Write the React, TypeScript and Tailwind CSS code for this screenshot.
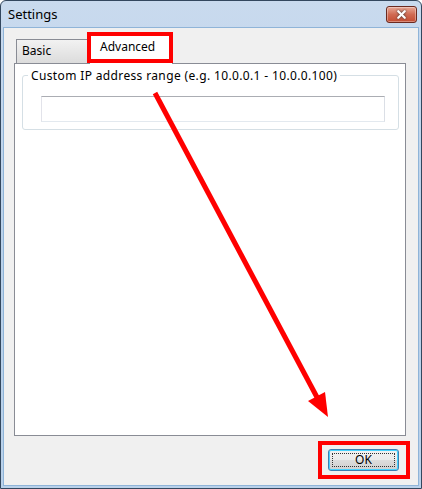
import { X } from "lucide-react";

const font = { fontFamily: '"Noto Sans", "Liberation Sans", sans-serif' };

const TitleBar = () => (
  <div className="h-[26px] flex items-start justify-between pl-[7px] pr-[4px] pt-[5px]">
    <span className="text-[13px] leading-[16px] text-black">Settings</span>
    <button className="w-[31px] h-[17px] rounded-[3px] border border-[#6b2a20] bg-gradient-to-b from-[#e8a896] via-[#d06a52] to-[#c44b30] flex items-center justify-center shadow-[inset_0_0_0_1px_rgba(255,255,255,0.35)]">
      <X size={13} strokeWidth={4} className="text-white drop-shadow-[0_0_1px_#333]" />
    </button>
  </div>
);

const Tabs = () => (
  <div className="h-[35px] flex items-end pl-[12px]">
    <div className="w-[73px] h-[24px] border border-b-0 border-[#898c95] bg-gradient-to-b from-[#f2f2f2] to-[#dcdcdc] text-[12px] leading-[22px] pl-[5px] text-black">
      Basic
    </div>
    <div className="w-[84px] h-[32px] -mb-px border border-b-0 border-[#898c95] bg-white text-[12px] leading-[28px] pl-[10px] text-black z-10">
      Advanced
    </div>
  </div>
);

const Panel = () => (
  <div className="ml-[10px] mr-[12px] h-[373px] border border-[#898c95] bg-white pl-[7px] pr-[6px] pt-[4px]">
    <fieldset className="border border-[#d5dfe5] rounded-[3px] p-0">
      <legend className="ml-[5px] px-[3px] text-[12px] leading-[15px] tracking-[0.36px] text-black">
        Custom IP address range (e.g. 10.0.0.1 - 10.0.0.100)
      </legend>
      <div className="pl-[18px] pr-[13px] pt-[13px] pb-[7px]">
        <input
          className="block w-full h-[26px] border border-[#abadb3] border-l-[#e2e3ea] border-r-[#dbdfe6] border-b-[#e3e9ef] outline-none"
          type="text"
        />
      </div>
    </fieldset>
  </div>
);

const Footer = () => (
  <div className="flex-1 flex justify-end items-start pt-[13px] pr-[19px]">
    <button className="relative w-[71px] h-[22px] rounded-[3px] border border-[#3c7fb1] bg-[linear-gradient(#f2f2f2_0%,#ebebeb_50%,#dddddd_50%,#cfcfcf_100%)] shadow-[inset_0_0_0_1px_#48d2fe] text-[12px] leading-[18px] text-black">
      <span className="absolute inset-[3px] border border-dotted border-[#333]" />
      OK
    </button>
  </div>
);

const Arrow = () => (
  <svg className="absolute inset-0 pointer-events-none z-20" width="422" height="489">
    <line x1="154" y1="92" x2="318" y2="400" stroke="#ff0000" strokeWidth="5" />
    <polygon points="307,400 324,391 327,416" fill="#ff0000" />
  </svg>
);

export default function App() {
  return (
    <div
      className="relative w-[422px] h-[489px] rounded-t-[6px] border border-[#33475e] bg-gradient-to-b from-[#c9daee] via-[#b9d1ea] to-[#b9d1ea] flex flex-col"
      style={font}
    >
      <TitleBar />
      <div className="ml-[2px] mr-[2px] mb-[2px] flex-1 flex flex-col bg-[#f0f0f0] border border-[#8fb4d8]">
        <Tabs />
        <Panel />
        <Footer />
      </div>
      {/* red annotation boxes */}
      <div className="absolute z-20 left-[86px] top-[31px] w-[86px] h-[31px] border-[4px] border-[#ff0000] pointer-events-none" />
      <div className="absolute z-20 left-[317px] top-[440px] w-[92px] h-[38px] border-[4px] border-[#ff0000] pointer-events-none" />
      <Arrow />
    </div>
  );
}
